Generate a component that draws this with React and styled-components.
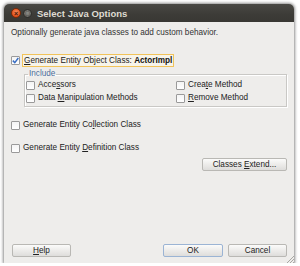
import React from 'react';
import styled, { createGlobalStyle } from 'styled-components';

const GlobalStyle = createGlobalStyle`
  html, body {
    margin: 0;
    padding: 0;
    background: #ffffff;
  }
  body {
    font-family: 'Liberation Sans', Arial, sans-serif;
  }
`;

const Window = styled.div`
  width: 290px;
  height: 259px;
  margin: 4px 0 0 4px;
  display: flex;
  flex-direction: column;
  background: #eeedeb;
  border-radius: 5px 5px 0 0;
  box-shadow: 0 0 3px 1px rgba(0, 0, 0, 0.45);
  position: relative;
  overflow: hidden;
`;

const TitleBar = styled.div`
  height: 18px;
  flex: none;
  display: flex;
  align-items: center;
  padding-left: 7px;
  background: linear-gradient(#4a4945, #3c3b37 60%, #393834);
`;

const WinButton = styled.span`
  width: ${p => p.$size}px;
  height: ${p => p.$size}px;
  border-radius: 50%;
  margin-right: ${p => p.$gap}px;
  box-sizing: border-box;
  background: ${p => p.$close
    ? 'radial-gradient(circle at 50% 40%, #f48b5b, #e0501c 70%, #b8400f)'
    : 'radial-gradient(circle at 50% 40%, #8d8c87, #6c6b66 70%, #55544f)'};
  border: 1px solid ${p => p.$close ? '#7a2a08' : '#2e2d2a'};
  display: flex;
  align-items: center;
  justify-content: center;
  color: ${p => p.$close ? '#3b1406' : '#3a3935'};
  font-size: 7px;
  font-weight: bold;
  line-height: 1;
`;

const Title = styled.span`
  margin-left: 5px;
  font-size: 9.5px;
  font-weight: bold;
  color: #dfdbd2;
`;

const Body = styled.div`
  flex: 1;
  display: flex;
  flex-direction: column;
  padding: 6px 7px 6px 7px;
  font-size: 8.2px;
  color: #222222;
`;

const Description = styled.div`
  height: 10px;
  line-height: 10px;
  color: #333333;
`;

const CheckRow = styled.label`
  display: flex;
  align-items: center;
  height: ${p => p.$h || 10}px;
  margin-top: ${p => p.$top || 0}px;
  line-height: 10px;
  white-space: pre;
`;

const Box = styled.span`
  width: 9px;
  height: 9px;
  flex: none;
  box-sizing: border-box;
  border: 1px solid #9a9a9a;
  border-radius: 1px;
  background: linear-gradient(#f4f4f4, #ffffff);
  margin-right: ${p => p.$gap || 3}px;
  display: flex;
  align-items: center;
  justify-content: center;
`;

const Text = styled.span`
  white-space: pre;
`;

const FocusLabel = styled.span`
  border: 1px solid #f1c35a;
  padding: 0 1px;
  margin-left: -1px;
  height: 11px;
  line-height: 11px;
  background: #f7f4ea;
  white-space: pre;
`;

const Bold = styled.b`
  font-weight: bold;
  color: #111111;
`;

const Group = styled.fieldset`
  margin: 3px 0 0 13px;
  padding: 1px 0 3px 1px;
  border: 1px solid #c9c8c5;
  box-shadow: inset 1px 1px 0 #ffffff, 1px 1px 0 #ffffff;
  display: grid;
  grid-template-columns: 150px 1fr;
  row-gap: 3px;
`;

const Legend = styled.legend`
  margin-left: 2px;
  padding: 0 1px;
  font-size: 8.2px;
  line-height: 10px;
  color: #4c6d9b;
`;

const ButtonRow = styled.div`
  display: flex;
  justify-content: ${p => p.$justify || 'flex-end'};
  align-items: center;
  margin-top: ${p => p.$top || 0}px;
`;

const Button = styled.button`
  width: ${p => p.$w}px;
  height: 13px;
  padding: 0;
  margin-left: ${p => p.$left || 0}px;
  box-sizing: border-box;
  border: 1px solid ${p => p.$default ? '#9bb4d4' : '#b9b8b4'};
  border-radius: 2px;
  background: linear-gradient(#fbfbfa, #ebeae8 55%, #dedddb);
  font-family: 'Liberation Sans', Arial, sans-serif;
  font-size: 8.2px;
  line-height: 11px;
  color: #222222;
`;

const Spacer = styled.div`
  flex: 1;
`;

const Grip = styled.svg`
  position: absolute;
  right: 0;
  bottom: 0;
`;

const Check = () => (
  <svg width="7" height="7" viewBox="0 0 7 7">
    <path d="M0.8 3.6 L2.8 5.6 L6.3 1" fill="none" stroke="#3a6fc4" strokeWidth="1.5" />
  </svg>
);

const Option = ({ children, checked, top }) => (
  <CheckRow $top={top}>
    <Box>{checked && <Check />}</Box>
    <Text>{children}</Text>
  </CheckRow>
);

const App = () => (
  <>
    <GlobalStyle />
    <Window>
      <TitleBar>
        <WinButton $close $size={10} $gap={2}>×</WinButton>
        <WinButton $size={9} $gap={0}>□</WinButton>
        <Title>Select Java Options</Title>
      </TitleBar>
      <Body>
        <Description>Optionally generate java classes to add custom behavior.</Description>
        <CheckRow $top={16} $h={12}>
          <Box $gap={3}><Check /></Box>
          <FocusLabel><u>G</u>enerate Entity Object Class: <Bold>ActorImpl</Bold></FocusLabel>
        </CheckRow>
        <Group>
          <Legend>Include</Legend>
          <Option>Acce<u>s</u>sors</Option>
          <Option>Crea<u>t</u>e Method</Option>
          <Option>Data <u>M</u>anipulation Methods</Option>
          <Option><u>R</u>emove Method</Option>
        </Group>
        <Option top={13}>Generate Entity Co<u>l</u>lection Class</Option>
        <Option top={13}>Generate Entity <u>D</u>efinition Class</Option>
        <ButtonRow $top={5}>
          <Button $w={85}>Classes <u>E</u>xtend...</Button>
        </ButtonRow>
        <Spacer />
        <ButtonRow $justify="flex-start">
          <Button $w={59} $left={1}><u>H</u>elp</Button>
          <Spacer />
          <Button $w={60} $default>OK</Button>
          <Button $w={59} $left={5}>Cancel</Button>
        </ButtonRow>
      </Body>
      <Grip width="8" height="8" viewBox="0 0 8 8">
        <path d="M8 1 L1 8 M8 4 L4 8 M8 7 L7 8" stroke="#a8a7a3" strokeWidth="1" />
      </Grip>
    </Window>
  </>
);

export default App;
